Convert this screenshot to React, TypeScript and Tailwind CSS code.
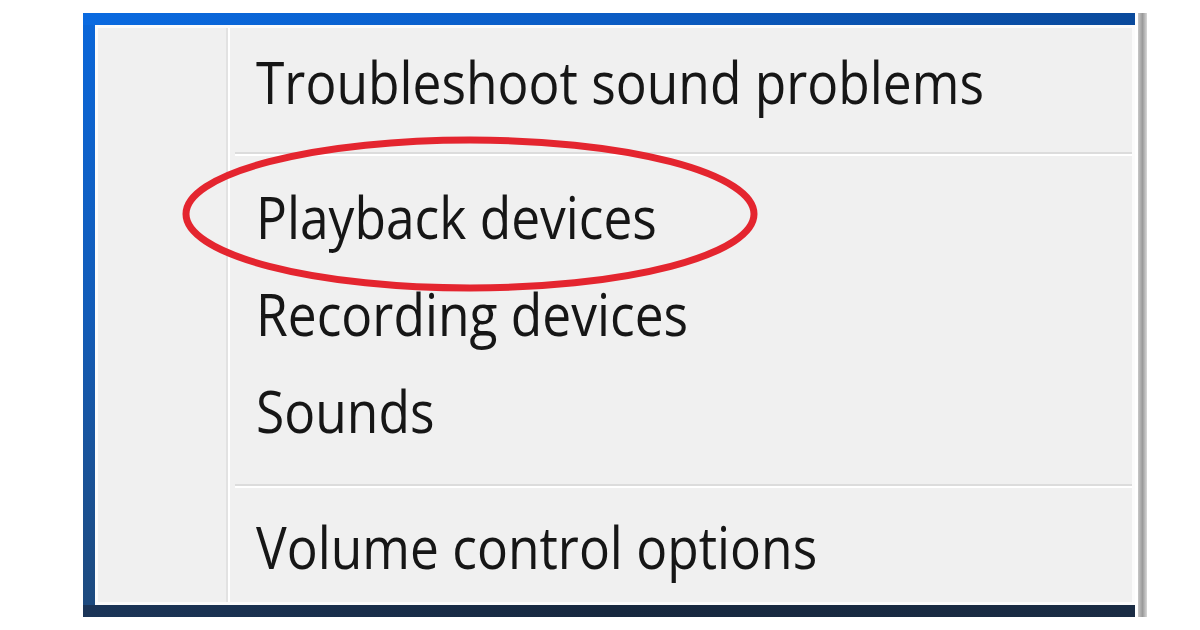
const items = {
  top: "Troubleshoot sound problems",
  middle: ["Playback devices", "Recording devices", "Sounds"],
  bottom: "Volume control options",
};

function MenuRow({ label }: { label: string }) {
  return (
    <div className="flex h-[97px] items-center pl-[158px]">
      <span className="origin-left scale-y-[1.13] text-[51.5px] leading-none text-[#161616]">
        {label}
      </span>
    </div>
  );
}

function Separator({ h, at }: { h: string; at: string }) {
  return (
    <div className={`${h} flex flex-col pl-[137px]`}>
      <div className={at} />
      <div className="h-[2px] bg-[#dcdcdc]" />
      <div className="h-[2px] bg-white" />
    </div>
  );
}

export default function App() {
  return (
    <div
      className="relative h-[630px] w-[1200px] overflow-hidden bg-white"
      style={{ fontFamily: '"Open Sans", "Noto Sans", sans-serif' }}
    >
      <div className="flex pt-[13px] pl-[83px]">
        {/* window frame */}
        <div className="flex h-[604px] w-[1052px] flex-col">
          <div className="h-[12px] bg-gradient-to-r from-[#0a6ae0] via-[#0b5cc4] to-[#0a4a9c]" />
          <div className="flex flex-1">
            <div className="w-[12px] bg-gradient-to-b from-[#0a66d8] via-[#125cb8] to-[#1d4a7e]" />
            <div className="relative flex flex-1 flex-col border-[3px] border-[#fbfbfb] bg-[#f0f0f0]">
              {/* icon gutter divider */}
              <div className="absolute top-0 bottom-0 left-[128px] flex">
                <div className="w-[2px] bg-[#e2e2e2]" />
                <div className="w-[2px] bg-white" />
              </div>
              <div className="pt-[5px]">
                <MenuRow label={items.top} />
              </div>
              <Separator h="h-[38px]" at="h-[22px]" />
              {items.middle.map((label) => (
                <MenuRow key={label} label={label} />
              ))}
              <Separator h="h-[39px]" at="h-[25px]" />
              <MenuRow label={items.bottom} />
            </div>
          </div>
          <div className="h-[12px] bg-gradient-to-r from-[#1b3558] via-[#17283f] to-[#1a2c44]" />
        </div>
        {/* right edge strip */}
        <div className="ml-[3px] h-[604px] w-[9px] bg-gradient-to-r from-[#c8c8c8] via-[#9a9a9a] to-[#d8d8d8]" />
      </div>

      {/* red annotation ellipse */}
      <svg className="absolute inset-0" width="1200" height="630">
        <ellipse cx="470" cy="214" rx="284" ry="74" fill="none" stroke="#e4252f" strokeWidth="7" />
      </svg>
    </div>
  );
}
